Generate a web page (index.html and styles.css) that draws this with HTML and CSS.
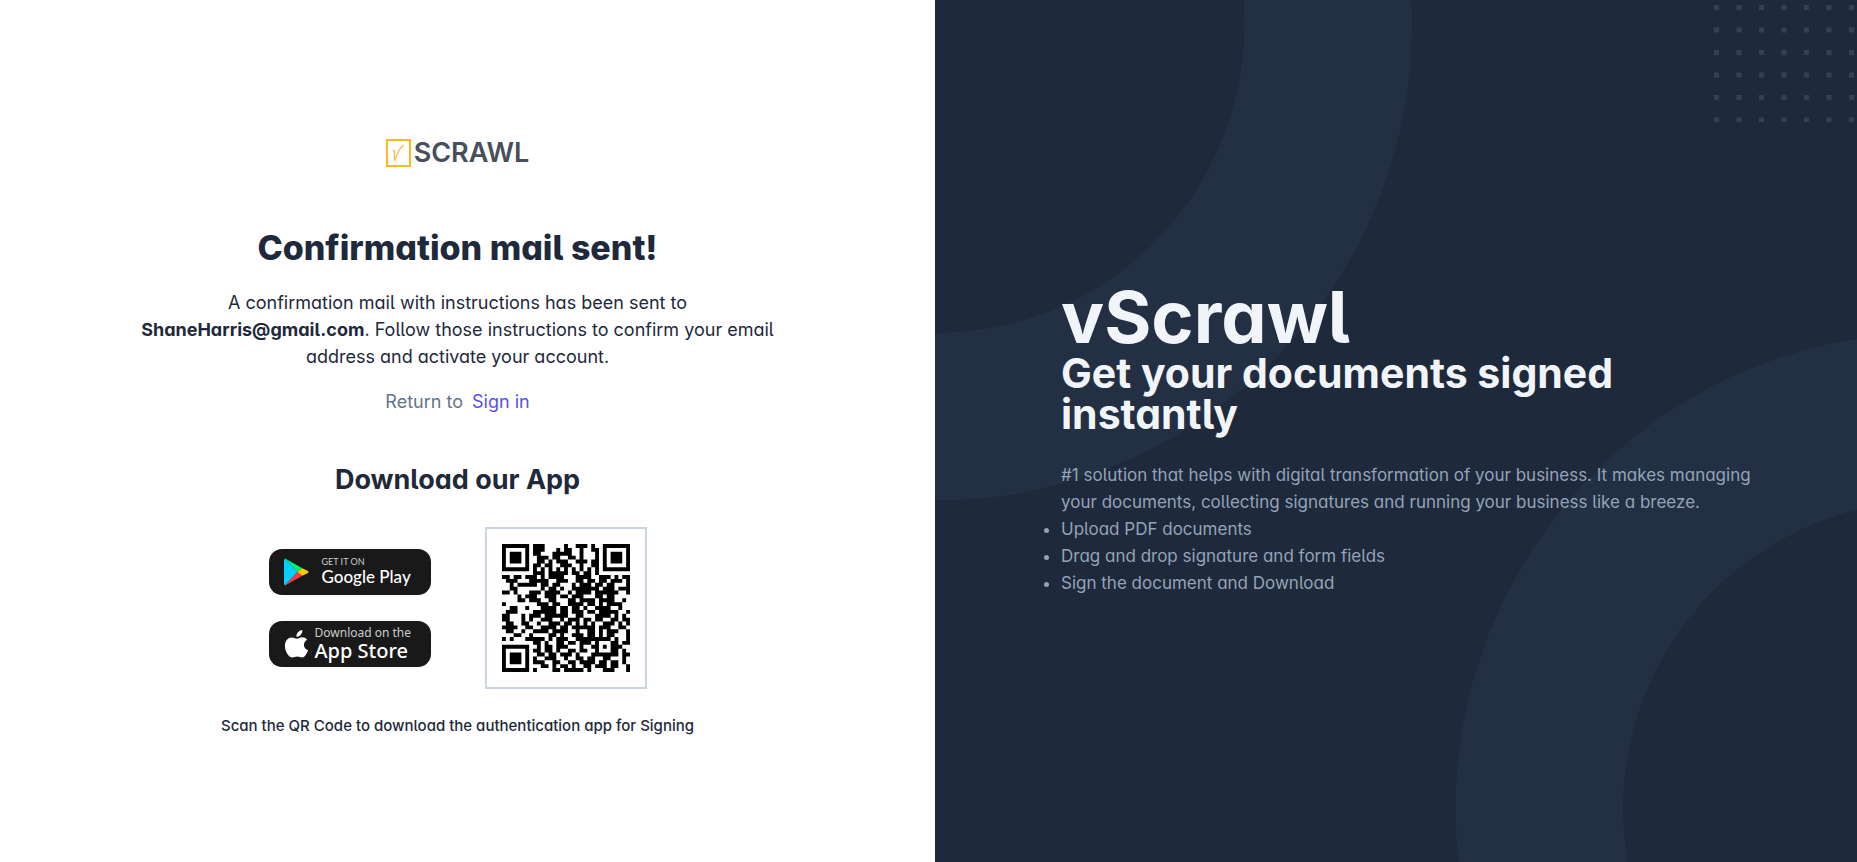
FILE: index.html
```html
<!DOCTYPE html>
<html lang="en">
<head>
<meta charset="utf-8">
<title>vScrawl</title>
<link rel="stylesheet" href="styles.css">
</head>
<body>
<div class="page">
  <main class="confirm">
    <div class="confirm-body">
      <div class="logo">
        <svg class="logo-mark" viewBox="0 0 25 28" aria-hidden="true">
          <rect x="1" y="1" width="23" height="26" fill="#fff" stroke="#fbb929" stroke-width="2"/>
          <path d="M7 12 L8.300 11.500 L8.500 22 C11 15 13.500 9 17.500 6" fill="none" stroke="#f9bd45" stroke-width="1.300"/>
        </svg>
        <span class="logo-text">SCRAWL</span>
      </div>
      <h1 class="title">Confirmation mail sent!</h1>
      <p class="message">A confirmation mail with instructions has been sent to <strong>ShaneHarris@gmail.com</strong>. Follow those instructions to confirm your email address and activate your account.</p>
      <p class="return">Return to <a class="link" href="#">Sign in</a></p>
      <h2 class="subtitle">Download our App</h2>
      <div class="download">
        <div class="badges">
          <a class="badge badge-google" href="#">
            <svg class="badge-icon" viewBox="0 0 26 28" aria-hidden="true">
              <path d="M1 0 L14 14 L1 28 Q0 27 0 26 V2 Q0 1 1 0Z" fill="#00d0ff"/>
              <path d="M1 0 Q2 0 3 1 L19 10 L14 14Z" fill="#00f076"/>
              <path d="M1 28 Q2 28 3 27 L19 18 L14 14Z" fill="#ff3a44"/>
              <path d="M19 10 L25 13 Q26 14 25 15 L19 18 L14 14Z" fill="#ffc900"/>
            </svg>
            <span class="badge-text"><small class="badge-small">GET IT ON</small><span class="badge-name">Google Play</span></span>
          </a>
          <a class="badge badge-apple" href="#">
            <svg class="badge-icon" viewBox="0 0 24 29" aria-hidden="true">
              <path d="M18 0 C18.300 4 15.500 7 12 7 C11.700 3.500 14.500 .5 18 0Z M12.500 9 C14 9 15.500 7.500 18 7.500 C20.500 7.500 22 8.800 23 10 C18 13 19 19 24 21 C23 24 20.500 28.500 18 28.500 C16 28.500 15 27.500 12.800 27.500 C10.500 27.500 9.500 28.500 7.500 28.500 C4 28.500 0 22 0 16.500 C0 11 3.500 7.700 7 7.700 C9.500 7.700 11 9 12.500 9Z" fill="#fff"/>
            </svg>
            <span class="badge-text"><small class="badge-small">Download on the</small><span class="badge-name">App Store</span></span>
          </a>
        </div>
        <div class="qr"><svg class="qr-code" id="qr" viewBox="0 0 33 33" role="img" aria-label="QR code"></svg></div>
      </div>
      <p class="hint">Scan the QR Code to download the authentication app for Signing</p>
    </div>
  </main>
  <aside class="promo">
    <svg class="rings" viewBox="0 0 960 540" preserveAspectRatio="xMidYMid slice" aria-hidden="true">
      <g fill="none" stroke="#33485a" stroke-opacity=".25" stroke-width="100">
        <circle r="234" cx="196" cy="23"/>
        <circle r="234" cx="790" cy="491"/>
      </g>
    </svg>
    <svg class="dots" viewBox="0 0 143 122" aria-hidden="true">
      <defs><pattern id="dot" width="22.500" height="22.500" patternUnits="userSpaceOnUse" y="5"><rect width="5" height="5" fill="#334155"/></pattern></defs>
      <rect y="5" width="143" height="117" fill="url(#dot)"/>
    </svg>
    <div class="promo-body">
      <h2 class="brand">vScrawl</h2>
      <p class="tagline">Get your documents signed instantly</p>
      <div class="details">
        <p class="details-text">#1 solution that helps with digital transformation of your business. It makes managing your documents, collecting signatures and running your business like a breeze.</p>
        <ul class="features">
          <li>Upload PDF documents</li>
          <li>Drag and drop signature and form fields</li>
          <li>Sign the document and Download</li>
        </ul>
      </div>
    </div>
  </aside>
</div>
<script src="qr.js"></script>
</body>
</html>
```
FILE: styles.css
```css
* { box-sizing: border-box; }
body, h1, h2, p, ul { margin: 0; padding: 0; }
body {
  font-family: Inter, "Liberation Sans", sans-serif;
  font-feature-settings: "cv02", "cv03", "cv04", "cv05", "cv11";
  font-size: 18px;
  line-height: 27px;
  color: #1e293b;
  background: #fff;
}
a { text-decoration: none; }
.page {
  display: grid;
  grid-template-columns: minmax(0, 935fr) minmax(0, 922fr);
  min-height: 100vh;
}
.confirm {
  display: flex;
  align-items: center;
  justify-content: center;
  padding: 15px 20px 0 0;
}
.confirm-body {
  max-width: 648px;
  text-align: center;
  display: flex;
  flex-direction: column;
  align-items: center;
}
.logo { display: flex; align-items: center; gap: 3px; }
.logo-mark { width: 25px; height: 28px; }
.logo-text { font-size: 27px; font-weight: 600; line-height: 28px; color: #474f5a; }
.title { margin-top: 58px; font-size: 34px; line-height: 45px; font-weight: 800; }
.message { margin-top: 19px; }
.message strong { font-weight: 700; }
.return { margin-top: 18px; color: #64748b; }
.link { margin-left: 4px; color: #5850ec; }
.subtitle { margin-top: 47px; font-size: 27px; line-height: 36px; font-weight: 700; }
.download { margin-top: 29px; display: flex; align-items: center; gap: 54px; }
.badges { display: flex; flex-direction: column; gap: 26px; }
.badge {
  width: 162px;
  height: 46px;
  border-radius: 13px;
  background: #191919;
  color: #fff;
  display: flex;
  align-items: center;
  padding-left: 15px;
  text-align: left;
}
.badge-icon { width: 25px; height: 28px; }
.badge-text { display: flex; flex-direction: column; }
.badge-google { gap: 13px; font-family: Lato, sans-serif; }
.badge-apple { gap: 6px; font-family: "Noto Sans", sans-serif; }
.badge-small { color: #ccc; font-size: 9px; line-height: 11px; }
.badge-name { font-size: 17px; line-height: 20px; font-weight: 500; }
.badge-apple .badge-small { font-size: 12px; line-height: 14px; }
.badge-apple .badge-name { font-size: 20px; line-height: 22px; }
.qr { width: 162px; height: 162px; padding: 15px; border: 2px solid #cbd5e1; }
.qr-code { display: block; width: 128px; height: 128px; }
.hint { margin-top: 23px; font-size: 15px; font-weight: 500; }
.promo {
  position: relative;
  overflow: hidden;
  display: flex;
  align-items: center;
  padding: 15px 94px 0 126px;
  background: #1e293b;
}
.rings { position: absolute; top: -14px; left: 0; width: calc(100% + 32px); height: calc(100% + 43px); }
.dots { position: absolute; top: 0; right: 0; width: 143px; height: 122px; }
.promo-body { position: relative; }
.brand { font-size: 72px; line-height: 72px; font-weight: 700; color: #f1f5f9; }
.tagline { font-size: 41px; line-height: 41px; font-weight: 700; color: #f1f5f9; }
.details { margin-top: 27px; font-size: 17px; color: #94a3b8; }
```
FILE: qr.js
```js
var rows = [
  "111111101110000010011101001111111",
  "100000101110001011001001101000001",
  "101110101100011111001000101011101",
  "101110100111011001101000101011101",
  "101110100110101110011101101011101",
  "100000101101100111001001101000001",
  "111111101010101010101010101111111",
  "000000001110111110110110100000000",
  "110110111010111100011110011101011",
  "011100011111001110011011011011101",
  "001011111011011000101110110110001",
  "001100000010110100111111101110111",
  "110100011101111001011110111111001",
  "000010111001110110111000110110000",
  "000011011100110001101111011110010",
  "100000000111011001111011010111100",
  "001100100011110110110100111100100",
  "011100001111110110111011011111001",
  "110001011101111110011000111101010",
  "110001010011100101110110110011011",
  "011001100100111011010101001110101",
  "111100110011110110111111011100110",
  "011001001111011110010011010111001",
  "000110010000110100111011010110001",
  "101000111110101110011111111101001",
  "000000001101001101101110100011011",
  "111111100101101110001001101011100",
  "100000101101101001101100100011010",
  "101110100110110111010001111111011",
  "101110101001110010011011001100010",
  "101110101110011001101111011011010",
  "100000100011010110100110111011001",
  "111111101000011011111010001110001"
];
var d = "";
rows.forEach(function (row, y) {
  row.replace(/1+/g, function (run, x) {
    d += "M" + x + " " + y + "h" + run.length + "v1h-" + run.length + "z";
  });
});
var path = document.createElementNS("http://www.w3.org/2000/svg", "path");
path.setAttribute("d", d);
document.getElementById("qr").appendChild(path);
```
